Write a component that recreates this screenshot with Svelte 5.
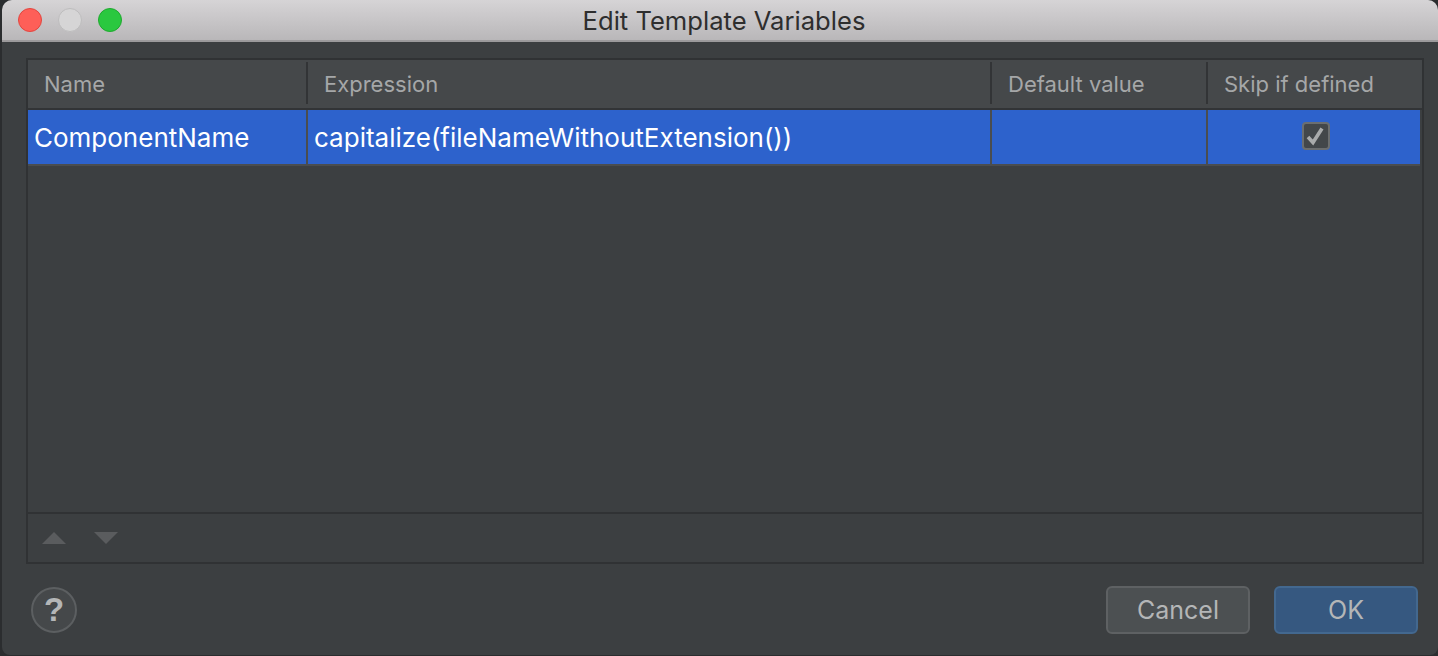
<script lang="ts">
  const columns = [
    { key: 'name', label: 'Name', value: 'ComponentName' },
    { key: 'expression', label: 'Expression', value: 'capitalize(fileNameWithoutExtension())' },
    { key: 'default', label: 'Default value', value: '' },
    { key: 'skip', label: 'Skip if defined', value: '' }
  ];
</script>

<div class="backdrop">
  <div class="window">
    <header class="titlebar">
      <div class="traffic">
        <span class="light red"></span>
        <span class="light grey"></span>
        <span class="light green"></span>
      </div>
      <h1>Edit Template Variables</h1>
    </header>

    <div class="content">
      <div class="table-frame">
        <div class="row head">
          {#each columns as col}
            <div class="cell {col.key}"><span>{col.label}</span></div>
          {/each}
        </div>
        <div class="row selected">
          {#each columns as col}
            <div class="cell {col.key}">
              {#if col.key === 'skip'}
                <span class="checkbox">
                  <svg viewBox="0 0 24 24" width="24" height="24" aria-hidden="true">
                    <path d="M4 13 L9 18.5 L18 4.5" fill="none" stroke="#a9abac" stroke-width="3.6" />
                  </svg>
                </span>
              {:else}
                {col.value}
              {/if}
            </div>
          {/each}
        </div>
        <div class="empty"></div>
        <div class="toolbar">
          <svg viewBox="0 0 24 12" width="24" height="12" aria-hidden="true"><path d="M0 12 L12 0 L24 12 Z" fill="#5a5c5e" /></svg>
          <svg viewBox="0 0 24 12" width="24" height="12" aria-hidden="true"><path d="M0 0 L24 0 L12 12 Z" fill="#5a5c5e" /></svg>
        </div>
      </div>

      <footer class="actions">
        <button class="help" type="button">?</button>
        <div class="buttons">
          <button class="btn" type="button">Cancel</button>
          <button class="btn primary" type="button">OK</button>
        </div>
      </footer>
    </div>
  </div>
</div>

<style>
  :global(body) {
    margin: 0;
    background: #2b2d2f;
  }

  .backdrop {
    width: 1438px;
    height: 656px;
    overflow: hidden;
    padding-left: 2px;
    box-sizing: border-box;
    font-family: "Inter", "Liberation Sans", sans-serif;
  }

  .window {
    height: 655px;
    display: flex;
    flex-direction: column;
    background: #3c3f41;
    border-radius: 10px 10px 8px 8px;
    overflow: hidden;
  }

  .titlebar {
    height: 40px;
    flex: none;
    display: flex;
    align-items: center;
    justify-content: center;
    position: relative;
    padding-left: 8px;
    background: linear-gradient(#d6d4d6, #b9b7b9);
    border-bottom: 2px solid #9c9a9c;
  }

  h1 {
    margin: 0;
    font-size: 25.6px;
    font-weight: 400;
    color: #2e2e2e;
  }

  .traffic {
    position: absolute;
    left: 16px;
    top: 8px;
    display: flex;
    gap: 16px;
  }

  .light {
    width: 24px;
    height: 24px;
    border-radius: 50%;
    box-sizing: border-box;
    border: 1px solid;
  }

  .red { background: #fe5f58; border-color: #e2463f; }
  .grey { background: #d6d5d6; border-color: #bdbcbd; }
  .green { background: #2ac83f; border-color: #1fa92f; }

  .content {
    flex: 1;
    display: flex;
    flex-direction: column;
    padding: 16px 14px 0 24px;
    min-height: 0;
  }

  .table-frame {
    height: 506px;
    flex: none;
    display: flex;
    flex-direction: column;
    border: 2px solid #303234;
    box-sizing: border-box;
  }

  .row {
    display: grid;
    grid-template-columns: 280px 684px 216px 1fr;
  }

  .head {
    height: 48px;
    background: #45484a;
    color: #a5a7a8;
    font-size: 22px;
    border-bottom: 2px solid #323436;
  }

  .head .cell {
    display: flex;
    align-items: center;
    padding: 2px 0 0 16px;
    margin: 2px 0 4px;
    border-right: 2px solid #323436;
    box-sizing: border-box;
  }

  .head .skip { border-right: none; }

  .selected {
    height: 54px;
    background: #2d62cc;
    color: #fff;
    font-size: 26px;
    border-bottom: 2px solid #4a4d4f;
    margin-right: 2px;
  }

  .selected .cell {
    display: flex;
    align-items: center;
    padding-left: 6px;
    border-right: 2px solid #4a4d4f;
    box-sizing: border-box;
  }

  .selected .skip {
    border-right: none;
    padding: 0 0 2px 4px;
    justify-content: center;
  }

  .checkbox {
    width: 28px;
    height: 28px;
    box-sizing: border-box;
    display: flex;
    align-items: center;
    justify-content: center;
    background: #43474a;
    border: 2px solid #6b6e70;
    border-radius: 4px;
  }

  .empty { flex: 1; }

  .toolbar {
    height: 48px;
    flex: none;
    display: flex;
    align-items: center;
    gap: 28px;
    padding-left: 14px;
    border-top: 2px solid #303234;
  }

  .actions {
    flex: 1;
    display: flex;
    align-items: center;
    justify-content: space-between;
    padding: 1px 0 0 5px;
  }

  .help {
    width: 46px;
    height: 46px;
    padding: 0;
    border-radius: 50%;
    background: #45484a;
    border: 2px solid #5c5f61;
    color: #b4b6b7;
    font: 700 33px "Liberation Sans", sans-serif;
  }

  .buttons {
    display: flex;
    gap: 24px;
    padding-right: 6px;
  }

  .btn {
    width: 144px;
    height: 48px;
    border-radius: 6px;
    background: #4c5052;
    border: 2px solid #5e6163;
    color: #b4b6b7;
    font: 400 25px "Inter", "Liberation Sans", sans-serif;
  }

  .primary {
    background: #365880;
    border-color: #43688f;
  }
</style>
